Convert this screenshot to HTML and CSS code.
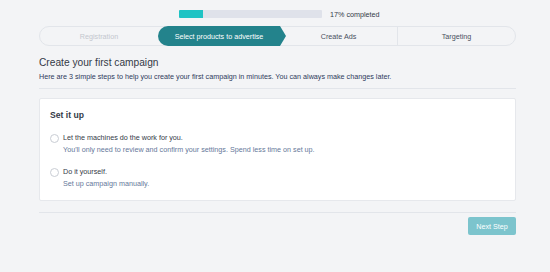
FILE: index.html
```html
<!DOCTYPE html>
<html lang="en">
<head>
<meta charset="utf-8">
<title>Create your first campaign</title>
<link rel="stylesheet" href="styles.css">
</head>
<body>
<div class="page">
  <div class="progress">
    <div class="track"><div class="fill" style="width:17%"></div></div>
    <span class="progress-label">17% completed</span>
  </div>

  <div class="stepper">
    <div class="step done">Registration</div>
    <div class="step active">Select products to advertise</div>
    <div class="step">Create Ads</div>
    <div class="step last">Targeting</div>
  </div>

  <div class="intro">
    <h1 class="title">Create your first campaign</h1>
    <p class="subtitle">Here are 3 simple steps to help you create your first campaign in minutes. You can always make changes later.</p>
  </div>

  <div class="card">
    <h2 class="card-title">Set it up</h2>
    <label class="option">
      <span class="radio"></span>
      <span class="option-text">
        <span class="option-label">Let the machines do the work for you.</span>
        <span class="option-desc">You'll only need to review and confirm your settings. Spend less time on set up.</span>
      </span>
    </label>
    <label class="option">
      <span class="radio"></span>
      <span class="option-text">
        <span class="option-label">Do it yourself.</span>
        <span class="option-desc">Set up campaign manually.</span>
      </span>
    </label>
  </div>

  <div class="footer">
    <button class="next-btn">Next Step</button>
  </div>
</div>
</body>
</html>
```

FILE: styles.css
```css
* { box-sizing: border-box; }
html, body { margin: 0; padding: 0; }
body {
  background: #f3f4f6;
  font-family: "Liberation Sans", Arial, sans-serif;
  color: #333a47;
  width: 550px;
  height: 272px;
  overflow: hidden;
}
.page {
  width: 477px;
  margin-left: 39px;
  padding-top: 10px;
}
.progress {
  display: flex;
  align-items: center;
  margin-left: 140px;
  height: 8px;
}
.track {
  width: 143px;
  height: 8px;
  background: #dfe2ea;
  border-radius: 1px;
  overflow: hidden;
}
.fill {
  height: 100%;
  background: #1fc3c4;
}
.progress-label {
  margin-left: 8px;
  font-size: 7.2px;
  color: #333a47;
}
.stepper {
  margin-top: 8px;
  height: 20px;
  border: 1px solid #e2e5ea;
  border-radius: 10px;
  display: grid;
  grid-template-columns: 118px 122px 117px 1fr;
  font-size: 7.2px;
}
.step {
  display: flex;
  align-items: center;
  justify-content: center;
  color: #4a5060;
}
.step.done { color: #c3c7ce; }
.step.active {
  position: relative;
  margin: -1px 0;
  background: #23838c;
  color: #ffffff;
  border-radius: 10px 0 0 10px;
}
.step.active::after {
  content: "";
  position: absolute;
  right: -6px;
  top: 0;
  border-left: 6px solid #23838c;
  border-top: 10px solid transparent;
  border-bottom: 10px solid transparent;
}
.step.last { border-left: 1px solid #e2e5ea; }
.intro {
  margin-top: 9px;
  padding-bottom: 5px;
  border-bottom: 1px solid #e2e5ea;
}
.title {
  margin: 0;
  font-size: 10.2px;
  line-height: 16px;
  font-weight: normal;
  color: #333a47;
}
.subtitle {
  margin: 0;
  font-size: 7.2px;
  line-height: 12px;
  color: #2e3a5c;
}
.card {
  margin-top: 9px;
  background: #ffffff;
  border: 1px solid #e6e8ec;
  border-radius: 2px;
  padding: 10px 10px 10px 10px;
}
.card-title {
  margin: 0 0 11px 0;
  font-size: 8.6px;
  line-height: 12px;
  font-weight: bold;
  color: #333a47;
}
.option {
  display: flex;
  align-items: flex-start;
}
.option + .option { margin-top: 10px; }
.radio {
  width: 9px;
  height: 9px;
  margin-top: 2px;
  margin-right: 4px;
  border: 1px solid #c9cdd4;
  border-radius: 50%;
  background: #ffffff;
  flex: none;
}
.option-text {
  display: flex;
  flex-direction: column;
}
.option-label {
  font-size: 7.2px;
  line-height: 12px;
  color: #333a47;
}
.option-desc {
  font-size: 7.2px;
  line-height: 12px;
  color: #66789a;
}
.footer {
  margin-top: 11px;
  border-top: 1px solid #e2e5ea;
  padding-top: 4px;
  display: flex;
  justify-content: flex-end;
}
.next-btn {
  width: 48px;
  height: 18px;
  border: none;
  border-radius: 2px;
  background: #7cc4cd;
  color: #ffffff;
  font-family: "Liberation Sans", Arial, sans-serif;
  font-size: 7.2px;
  padding: 0;
}
```
